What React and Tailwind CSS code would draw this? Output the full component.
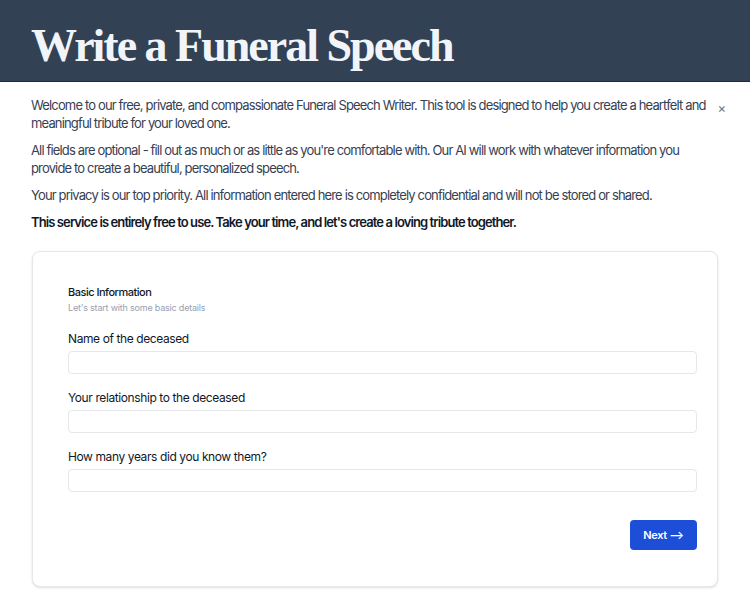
import { useState } from "react";

const fields = [
  { id: "name", label: "Name of the deceased" },
  { id: "relationship", label: "Your relationship to the deceased" },
  { id: "years", label: "How many years did you know them?" },
];

export default function App() {
  const [values, setValues] = useState({});
  const [showIntro, setShowIntro] = useState(true);

  return (
    <div className="min-h-screen bg-white font-['Inter',sans-serif] text-gray-700">
      <header className="h-[82px] border-b border-[#1e293b] bg-[#334155] px-[31px] pt-[19px]">
        <h1 className="font-['Liberation_Serif',serif] text-[46px] font-bold leading-[54px] tracking-[-2px] text-[#f1f5f9]">
          Write a Funeral Speech
        </h1>
      </header>

      <main className="px-8 pb-6">
        {showIntro && (
          <div className="relative pt-[14px] text-[13px] leading-[18px] tracking-[-0.85px]">
            <div className="-ml-px -mr-[8px] space-y-[9px] pr-[8px]">
              <p>
                Welcome to our free, private, and compassionate Funeral Speech
                Writer. This tool is designed to help you create a heartfelt and
                meaningful tribute for your loved one.
              </p>
              <p>
                All fields are optional - fill out as much or as little as
                you're comfortable with. Our AI will work with whatever
                information you provide to create a beautiful, personalized
                speech.
              </p>
              <p>
                Your privacy is our top priority. All information entered here
                is completely confidential and will not be stored or shared.
              </p>
              <p className="font-semibold tracking-[-0.9px] text-gray-900">
                This service is entirely free to use. Take your time, and let's
                create a loving tribute together.
              </p>
            </div>
            <button
              type="button"
              onClick={() => setShowIntro(false)}
              className="absolute -right-[8px] top-[20px] text-[13px] leading-none tracking-normal text-gray-500"
            >
              ×
            </button>
          </div>
        )}

        <section className="mt-[20px] rounded-lg border border-gray-200 bg-white pb-9 pl-[35px] pr-5 pt-[33px] shadow-sm">
          <h2 className="text-[11px] font-medium leading-[14px] tracking-[-0.5px] text-gray-900">
            Basic Information
          </h2>
          <p className="mt-[3px] text-[9px] leading-[12px] tracking-[-0.2px] text-gray-400">
            Let's start with some basic details
          </p>

          <div className="mt-[17px] space-y-[16px]">
            {fields.map((field) => (
              <div key={field.id}>
                <label
                  htmlFor={field.id}
                  className="block text-[12px] leading-[16px] tracking-[-0.4px] text-gray-900"
                >
                  {field.label}
                </label>
                <input
                  id={field.id}
                  value={values[field.id] || ""}
                  onChange={(e) =>
                    setValues((current) => ({
                      ...current,
                      [field.id]: e.target.value,
                    }))
                  }
                  className="mt-1 block h-[23px] w-full rounded border border-gray-200 px-2 text-[12px] outline-none"
                />
              </div>
            ))}
          </div>

          <div className="mt-[28px] flex justify-end">
            <button
              type="button"
              className="h-[30px] w-[67px] rounded bg-[#1d4ed8] text-[11px] font-semibold tracking-[-0.3px] text-white"
            >
              Next ⟶
            </button>
          </div>
        </section>
      </main>
    </div>
  );
}
